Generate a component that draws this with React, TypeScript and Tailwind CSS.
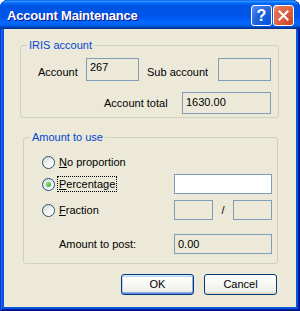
import React from "react";

const fieldRO =
  "h-full border border-[#7F9DB9] bg-[#ECE9D8] text-[11px] leading-[13px] pl-[3px] text-black";

function Radio({ checked }: { checked?: boolean }) {
  return (
    <span className="w-[13px] h-[13px] shrink-0 rounded-full border border-[#1C5180] bg-[linear-gradient(135deg,#DCD7CB,#FFFFFF_75%)] flex items-center justify-center">
      {checked && (
        <span className="w-[5px] h-[5px] rounded-full bg-[radial-gradient(circle_at_35%_35%,#7FE37B,#21A121)]" />
      )}
    </span>
  );
}

export default function App() {
  return (
    <div className="w-[300px] h-[311px] flex flex-col rounded-t-[8px] bg-[#0855DD] shadow-[inset_1px_0_#0831D9,inset_-1px_0_#00138C,inset_0_-1px_#00138C,inset_2px_0_#166AEE,inset_-2px_0_#001EA0,inset_0_-2px_#001EA0] font-['Liberation_Sans',Arial,sans-serif] text-[11px] text-black select-none">
      {/* Title bar */}
      <div className="h-[29px] shrink-0 flex items-center pl-[7px] pr-[6px] rounded-t-[8px] bg-[linear-gradient(to_bottom,#0058EE_0%,#3593FF_4%,#288EFF_6%,#127DFF_8%,#036FFC_10%,#0262EE_14%,#0057E5_20%,#0054E3_24%,#0055EB_56%,#005BF5_66%,#026AFE_76%,#0062EF_86%,#0052D6_92%,#0040AB_94%,#003092_100%)]">
        <div className="flex-1 pt-[2px] text-white font-bold text-[13px] tracking-[-0.2px] [text-shadow:1px_1px_#0F1089]">
          Account Maintenance
        </div>
        <div className="flex gap-[1px] mt-[2px]">
          <div className="w-[21px] h-[21px] rounded-[3px] border border-white bg-[radial-gradient(circle_at_90%_90%,#0054E9_0%,#2263D5_55%,#4480F8_85%,#6D9BFA_100%)] flex items-center justify-center text-white font-bold text-[16px] leading-none">
            ?
          </div>
          <div className="w-[21px] h-[21px] rounded-[3px] border border-white bg-[radial-gradient(circle_at_90%_90%,#CC4628_0%,#DC6546_55%,#E5704C_80%,#F4A488_100%)] flex items-center justify-center">
            <svg width="11" height="11" viewBox="0 0 11 11">
              <path d="M1.5 1.5 L9.5 9.5 M9.5 1.5 L1.5 9.5" stroke="white" strokeWidth="2" strokeLinecap="square" />
            </svg>
          </div>
        </div>
      </div>

      {/* Client area */}
      <div className="flex-1 mx-[4px] mb-[4px] bg-[#ECE9D8] flex flex-col">
        {/* IRIS account */}
        <fieldset className="ml-[16px] mt-[9px] w-[259px] h-[80px] border border-[#D0D0BF] rounded-[3px]">
          <legend className="ml-[6px] px-[2px] text-[#0046D5] leading-[14px]">IRIS account</legend>
          <div className="flex flex-col pt-[6px]">
            <div className="flex h-[23px] items-center pl-[17px]">
              <span className="w-[48px] pt-[5px]">Account</span>
              <div className={`${fieldRO} w-[53px] pt-[2px]`}>267</div>
              <span className="w-[79px] pl-[8px] pt-[5px]">Sub account</span>
              <div className={`${fieldRO} w-[53px]`}></div>
            </div>
            <div className="flex h-[22px] items-center mt-[11px] pl-[83px]">
              <span className="w-[78px]">Account total</span>
              <div className={`${fieldRO} w-[89px] pt-[3px]`}>1630.00</div>
            </div>
          </div>
        </fieldset>

        {/* Amount to use */}
        <fieldset className="ml-[19px] mt-[12px] w-[255px] h-[134px] border border-[#D0D0BF] rounded-[3px]">
          <legend className="ml-[6px] px-[2px] text-[#0046D5] leading-[14px]">Amount to use</legend>
          <div className="flex flex-col pt-[8px]">
            <div className="flex h-[20px] items-center">
              <div className="w-[150px] flex items-center pl-[18px] gap-[2px]">
                <Radio />
                <span className="px-[1px] border border-transparent">
                  <u>N</u>o proportion
                </span>
              </div>
            </div>
            <div className="flex h-[20px] items-center mt-[2px]">
              <div className="w-[150px] flex items-center pl-[18px] gap-[2px]">
                <Radio checked />
                <span className="px-[1px] border border-dotted border-black leading-[14px]">
                  <u>P</u>ercentage
                </span>
              </div>
              <div className="w-[98px] h-[20px] border border-[#7F9DB9] bg-white"></div>
            </div>
            <div className="flex h-[20px] items-center mt-[6px]">
              <div className="w-[150px] flex items-center pl-[18px] gap-[2px]">
                <Radio />
                <span className="px-[1px] border border-transparent">
                  <u>F</u>raction
                </span>
              </div>
              <div className={`${fieldRO} w-[39px]`}></div>
              <span className="w-[20px] text-center">/</span>
              <div className={`${fieldRO} w-[39px]`}></div>
            </div>
            <div className="flex h-[20px] items-center mt-[14px]">
              <div className="w-[150px] pl-[35px]">Amount to post:</div>
              <div className={`${fieldRO} w-[98px] pt-[3px]`}>0.00</div>
            </div>
          </div>
        </fieldset>

        {/* Buttons */}
        <div className="flex justify-end gap-[10px] pr-[19px] mt-[10px]">
          <button className="w-[73px] h-[21px] rounded-[3px] border border-[#003C74] bg-[linear-gradient(to_bottom,#FFFFFF,#F0F0EA_85%,#D6D0C5)] shadow-[inset_0_1px_#CEE7FF,inset_0_-1px_#6982EE,inset_1px_0_#B9D1FA,inset_-1px_0_#90A9F0,inset_0_2px_#BCD4F6,inset_0_-2px_#89ADE4] text-[11px] leading-none text-black">
            OK
          </button>
          <button className="w-[73px] h-[21px] rounded-[3px] border border-[#003C74] bg-[linear-gradient(to_bottom,#FFFFFF,#F0F0EA_85%,#D6D0C5)] text-[11px] leading-none text-black">
            Cancel
          </button>
        </div>
      </div>
    </div>
  );
}
